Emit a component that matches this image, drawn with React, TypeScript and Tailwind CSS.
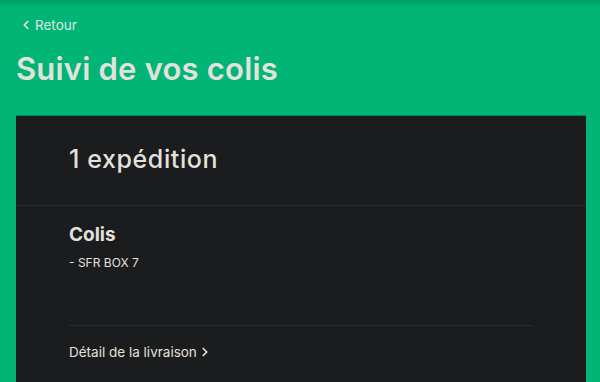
import { ChevronLeft, ChevronRight } from "lucide-react";

export default function App() {
  const font = { fontFamily: 'Inter, "DejaVu Sans", sans-serif' };
  return (
    <div
      className="h-[382px] w-[600px] overflow-hidden bg-[#00b576] text-[#e4e0db] shadow-[inset_0_6px_6px_-4px_rgba(0,0,0,0.18)]"
      style={font}
    >
      <div className="px-4 pt-[15px]">
        <a className="flex items-center gap-[2px] pl-[3px] text-[13.5px] text-[#dfe8e1]">
          <ChevronLeft className="h-[14px] w-[14px]" strokeWidth={3} />
          Retour
        </a>
        <h1 className="mt-[14px] text-[31px] font-semibold tracking-[0.2px] leading-[40px]">
          Suivi de vos colis
        </h1>
      </div>

      <div className="ml-4 mt-[27px] w-[570px] bg-[#1b1c1e] shadow-[0_-1px_0_rgba(0,0,0,0.2)]">
        <div className="flex h-[90px] items-center px-[53px] pb-[2px] border-b border-[#2b2c2e]">
          <h2 className="text-[25px] font-medium tracking-[0.6px]">1 expédition</h2>
        </div>
        <div className="px-[53px] pt-[17px]">
          <h3 className="text-[19px] font-bold leading-[24px]">Colis</h3>
          <p className="mt-[7px] text-[12px]">- SFR BOX 7</p>
          <div className="mt-[53px] border-t border-[#2b2c2e]" />
          <a className="mt-[16px] flex items-center gap-[1px] pb-[20px] text-[13.5px]">
            Détail de la livraison
            <ChevronRight className="h-[14px] w-[14px]" strokeWidth={3} />
          </a>
        </div>
      </div>
    </div>
  );
}
